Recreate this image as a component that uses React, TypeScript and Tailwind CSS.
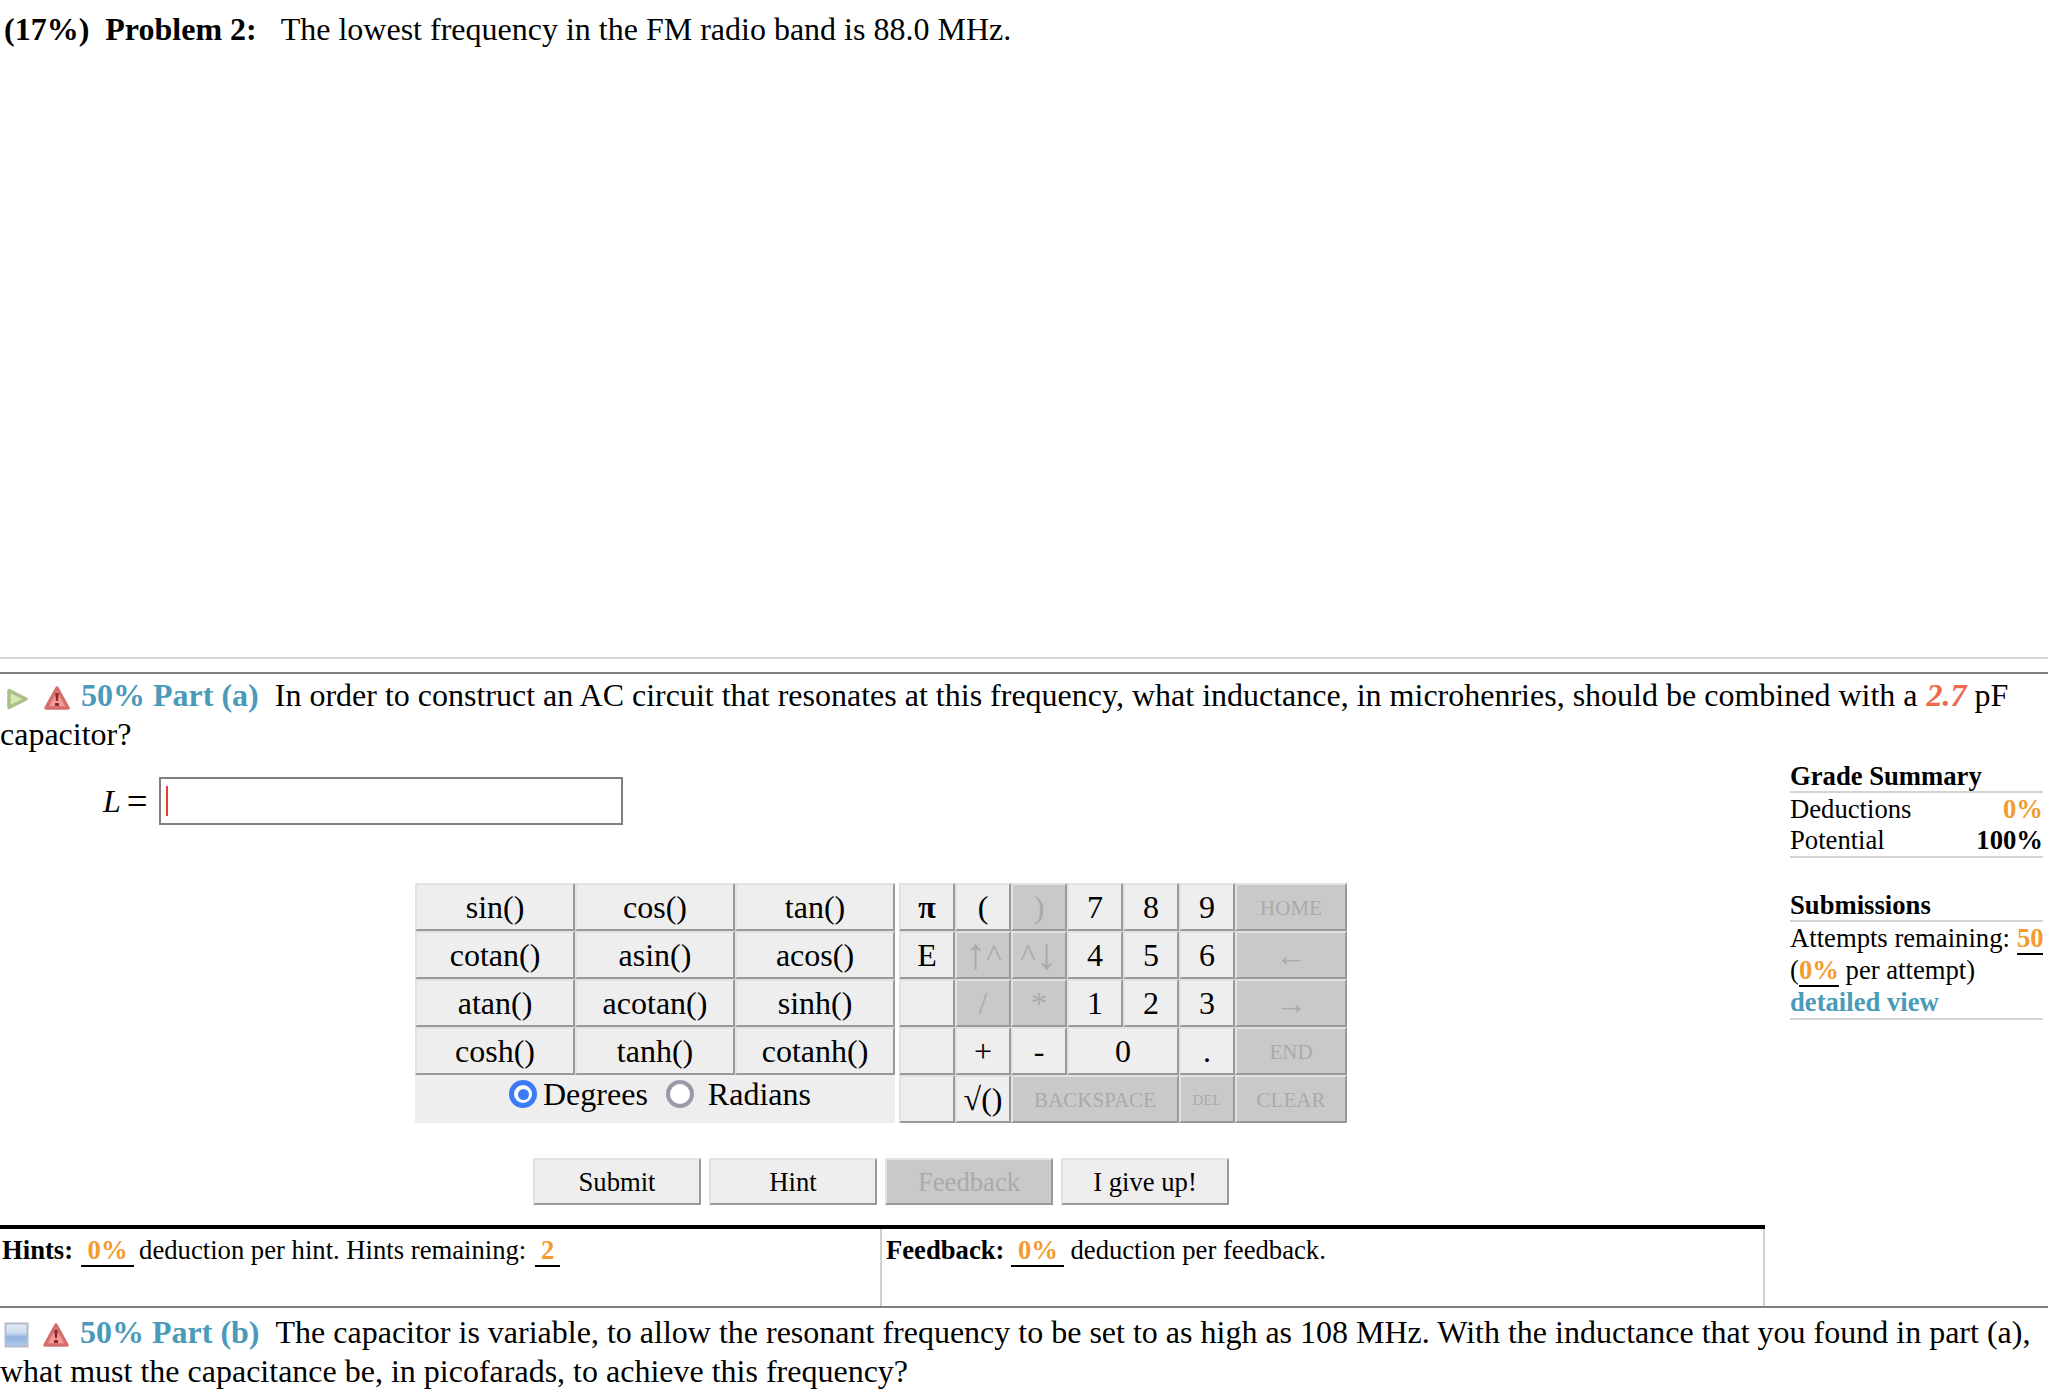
import React from "react";

const Play = () => (
  <svg width="22" height="22" viewBox="0 0 22 22" className="inline-block align-[-4px] ml-[6px] blur-[0.5px]">
    <path d="M3 2.5 L20 11 L3 19.5 Z" fill="#d8e9ae" stroke="#abc088" strokeWidth="3.5" strokeLinejoin="round" />
  </svg>
);
const Warn = () => (
  <svg width="26" height="26" viewBox="0 0 26 26" className="inline-block align-[-5px] blur-[0.5px]">
    <path d="M13 3 L24 23 L2 23 Z" fill="#f29a98" stroke="#d56f6f" strokeWidth="3.5" strokeLinejoin="round" />
    <path d="M11.2 8 H14.8 L14 16 H12 Z" fill="#8f2a2a" />
    <rect x="11" y="18" width="4" height="3" fill="#8f2a2a" />
  </svg>
);
const Doc = () => (
  <svg width="25" height="26" viewBox="0 0 25 26" className="inline-block align-[-5px] ml-[4px] blur-[0.5px]">
    <defs>
      <linearGradient id="bl" x1="0" y1="0" x2="0" y2="1">
        <stop offset="0" stopColor="#e6edf7" />
        <stop offset="0.4" stopColor="#cfdcf0" />
        <stop offset="0.6" stopColor="#8fb2e0" />
        <stop offset="1" stopColor="#b3cae9" />
      </linearGradient>
    </defs>
    <rect x="1.5" y="1.5" width="22" height="23" fill="url(#bl)" stroke="#b2bccb" strokeWidth="2" />
  </svg>
);

const Key = ({ children, off, cls = "" }: { children?: React.ReactNode; off?: boolean; cls?: string }) => (
  <div
    className={`flex items-center justify-center border-2 border-t-[#e2e2e2] border-l-[#e2e2e2] border-r-[#999999] border-b-[#999999] ${
      off ? "bg-[#c9c9c9] text-[#aaaaaa]" : "bg-[#eeeeee] text-black"
    } ${cls}`}
  >
    {children}
  </div>
);

const Btn = ({ children, off, cls = "" }: { children: React.ReactNode; off?: boolean; cls?: string }) => (
  <div
    className={`flex items-center justify-center h-[47px] pt-[2px] text-[26.67px] border-2 border-t-[#e2e2e2] border-l-[#e2e2e2] border-r-[#999999] border-b-[#999999] ${
      off ? "bg-[#c9c9c9] text-[#aaaaaa]" : "bg-[#eeeeee]"
    } ${cls}`}
  >
    {children}
  </div>
);

const Val = ({ children, cls = "" }: { children: React.ReactNode; cls?: string }) => (
  <span className={`inline-block text-center font-bold text-[#f39b2f] border-b-2 border-black leading-[30px] ${cls}`}>{children}</span>
);

const fns = ["sin()", "cos()", "tan()", "cotan()", "asin()", "acos()", "atan()", "acotan()", "sinh()", "cosh()", "tanh()", "cotanh()"];

export default function App() {
  return (
    <div className="w-[2048px] h-[1392px] overflow-hidden bg-white text-black text-[32px] leading-[39px] font-['Liberation_Serif',serif]">
      <div className="h-[657px] pl-[4px] pt-[10px]">
        <span className="font-bold">(17%)&nbsp; Problem 2:</span>
        <span className="ml-[24px]">The lowest frequency in the FM radio band is 88.0 MHz.</span>
      </div>
      <div className="h-[2px] bg-[#d6d6d6]" />
      <div className="h-[13px]" />
      <div className="h-[2px] bg-[#808080]" />
      <p className="pt-[2px] w-[2030px]">
        <Play />
        <span className="ml-[16px]"><Warn /></span>
        <span className="ml-[11px] font-bold text-[#4a9aba]">50% Part (a)</span>
        <span className="ml-[16px]">In order to construct an AC circuit that resonates at this frequency, what inductance, in microhenries, should be combined with a </span>
        <span className="ml-[1px] italic font-semibold text-[#ee6a4d]">2.7</span> pF capacitor?
      </p>

      <div className="flex">
        <div className="w-[1790px] shrink-0">
          <div className="flex items-center mt-[23px] pl-[103px] h-[48px]">
            <span className="italic">L</span>
            <span className="ml-[6px] text-[37px]">=</span>
            <div className="ml-[11px] w-[464px] h-[48px] border-2 border-[#808080] flex items-center pl-[5px]">
              <div className="w-[2px] h-[30px] bg-[#ee3b2f]" />
            </div>
          </div>

          <div className="flex gap-[4px] mt-[58px] ml-[415px]">
            <div className="grid grid-cols-3 w-[480px] grid-rows-[repeat(5,48px)]">
              {fns.map((f) => (
                <Key key={f}>{f}</Key>
              ))}
              <div className="col-span-3 bg-[#eeeeee] flex items-center pb-[10px] pl-[94px]">
                <div className="w-[28px] h-[28px] rounded-full border-[5px] border-[#3b7cf6] bg-white flex items-center justify-center">
                  <div className="w-[11px] h-[11px] rounded-full bg-[#3b7cf6]" />
                </div>
                <span className="ml-[6px]">Degrees</span>
                <div className="ml-[18px] w-[28px] h-[28px] rounded-full border-[4px] border-[#9a9aa8] bg-white" />
                <span className="ml-[14px]">Radians</span>
              </div>
            </div>
            <div className="grid grid-cols-[repeat(6,56px)_112px] grid-rows-[repeat(5,48px)]">
              <Key cls="font-bold">π</Key>
              <Key>(</Key>
              <Key off>)</Key>
              <Key>7</Key>
              <Key>8</Key>
              <Key>9</Key>
              <Key off cls="text-[21px] pt-[2px]">HOME</Key>

              <Key>E</Key>
              <Key off>
                <span className="text-[44px] leading-none">↑</span>^
              </Key>
              <Key off>
                ^<span className="text-[44px] leading-none">↓</span>
              </Key>
              <Key>4</Key>
              <Key>5</Key>
              <Key>6</Key>
              <Key off>←</Key>

              <Key />
              <Key off>/</Key>
              <Key off>*</Key>
              <Key>1</Key>
              <Key>2</Key>
              <Key>3</Key>
              <Key off>→</Key>

              <Key />
              <Key>+</Key>
              <Key>-</Key>
              <Key cls="col-span-2">0</Key>
              <Key>.</Key>
              <Key off cls="text-[21px] pt-[2px]">END</Key>

              <Key />
              <Key>√()</Key>
              <Key off cls="col-span-3 text-[21px] pt-[2px]">BACKSPACE</Key>
              <Key off cls="text-[15px] pt-[2px]">DEL</Key>
              <Key off cls="text-[21px] pt-[2px]">CLEAR</Key>
            </div>
          </div>

          <div className="flex mt-[35px] ml-[533px] gap-[8px]">
            <Btn cls="w-[168px]">Submit</Btn>
            <Btn cls="w-[168px]">Hint</Btn>
            <Btn off cls="w-[168px]">Feedback</Btn>
            <Btn cls="w-[168px]">I give up!</Btn>
          </div>

          <div className="mt-[20px] w-[1765px] flex h-[81px] border-t-4 border-black text-[26.67px] leading-[30px]">
            <div className="w-[882px] border-r-2 border-[#d0d0d0] pl-[2px] pt-[6px]">
              <b>Hints:</b>
              <Val cls="ml-[8px] w-[53px]">0%</Val>
              <span className="ml-[5px]">deduction per hint. Hints remaining:</span>
              <Val cls="ml-[9px] w-[25px]">2</Val>
            </div>
            <div className="flex-1 border-r-2 border-[#d0d0d0] pl-[4px] pt-[6px]">
              <b>Feedback:</b>
              <Val cls="ml-[7px] w-[53px]">0%</Val>
              <span className="ml-[6px]">deduction per feedback.</span>
            </div>
          </div>
        </div>

        <div className="w-[253px] mt-[7px] text-[26.67px] leading-[31px]">
          <div className="font-bold border-b-2 border-[#d3d3d3] h-[32px]">Grade Summary</div>
          <div className="flex justify-between mt-[1px]">
            <span>Deductions</span>
            <b className="text-[#f39b2f]">0%</b>
          </div>
          <div className="flex justify-between border-b-2 border-[#d3d3d3]">
            <span>Potential</span>
            <b>100%</b>
          </div>
          <div className="font-bold border-b-2 border-[#d3d3d3] h-[32px] mt-[32px]">Submissions</div>
          <div className="flex justify-between mt-[1px]">
            <span>Attempts remaining:</span>
            <Val cls="w-[26px]">50</Val>
          </div>
          <div>
            (<Val cls="w-[40px]">0%</Val> per attempt)
          </div>
          <div className="font-bold text-[#4a9aba] border-b-2 border-[#d3d3d3] h-[33px]">detailed view</div>
        </div>
      </div>

      <div className="h-[2px] bg-[#808080]" />
      <p className="pt-[5px]">
        <Doc />
        <span className="ml-[14px]"><Warn /></span>
        <span className="ml-[11px] font-bold text-[#4a9aba]">50% Part (b)</span>
        <span className="ml-[16px]">The capacitor is variable, to allow the resonant frequency to be set to as high as 108 MHz. With the inductance that you found in part (a), what must the capacitance be, in picofarads, to achieve this frequency?</span>
      </p>
    </div>
  );
}
